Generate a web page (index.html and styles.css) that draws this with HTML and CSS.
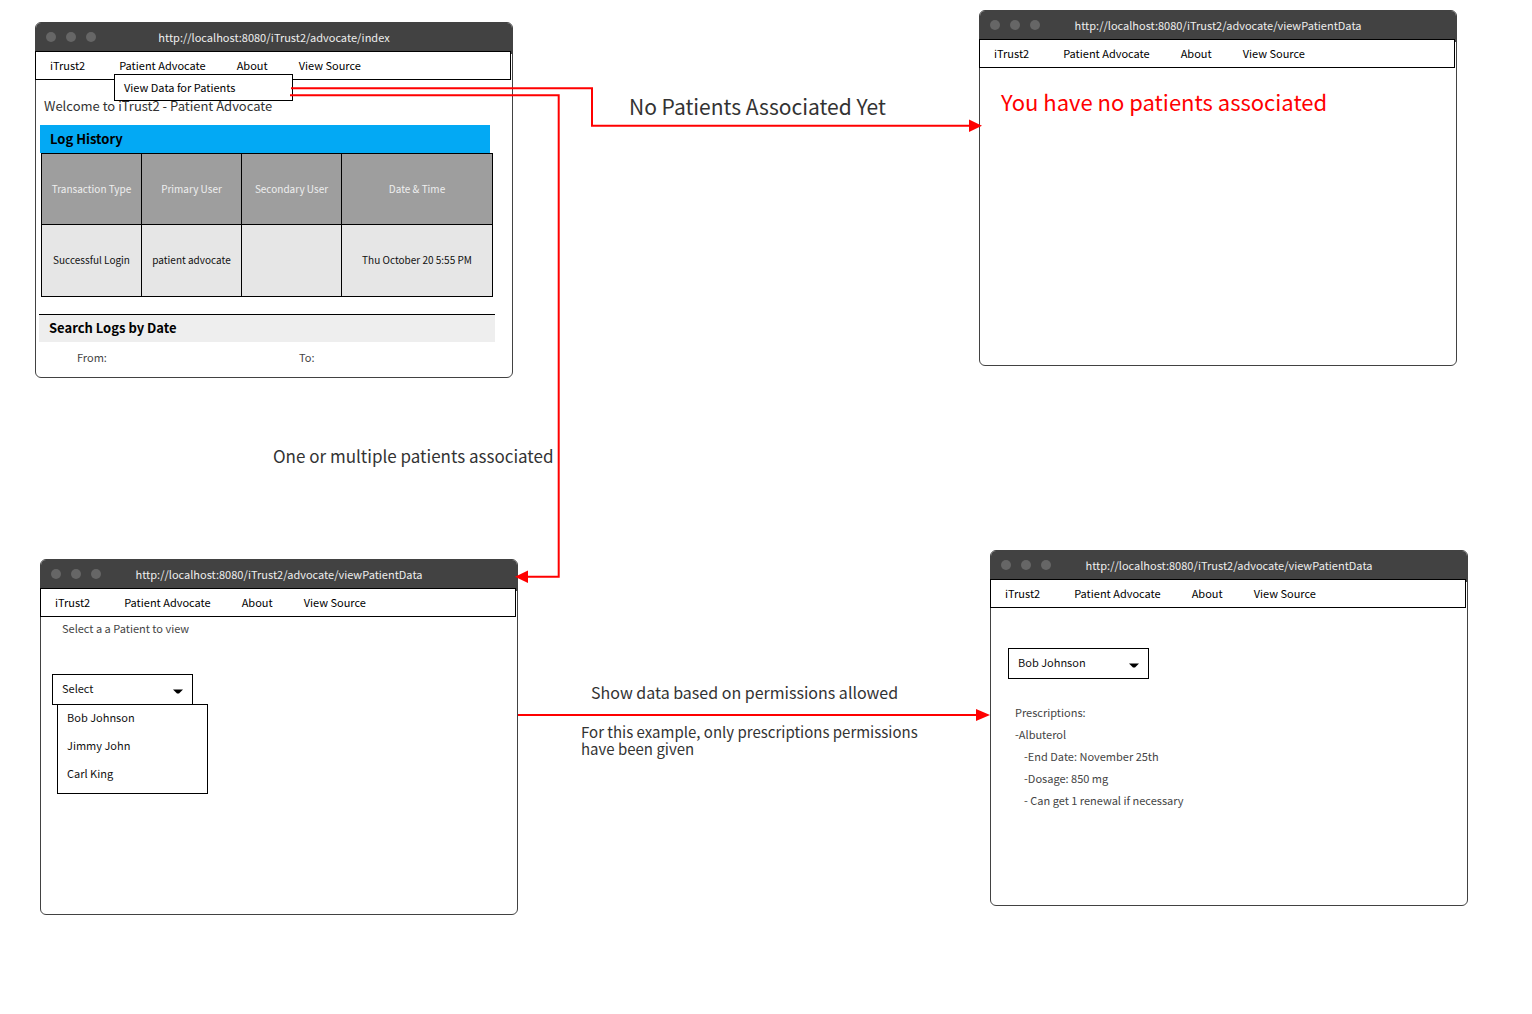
FILE: index.html
```html
<!DOCTYPE html>
<html lang="en">
<head>
<meta charset="utf-8">
<title>iTrust2 - Patient Advocate flow</title>
<link rel="stylesheet" href="styles.css">
</head>
<body>
<main class="canvas">

  <section class="window window-index">
    <header class="titlebar">
      <span class="dots"><i></i><i></i><i></i></span>
      <span class="url">http://localhost:8080/iTrust2/advocate/index</span>
    </header>
    <nav class="nav">
      <a class="brand" href="#">iTrust2</a>
      <a href="#">Patient Advocate</a>
      <a href="#">About</a>
      <a href="#">View Source</a>
      <div class="menu"><a href="#">View Data for Patients</a></div>
    </nav>
    <div class="index-body">
      <h1 class="welcome">Welcome to iTrust2 - Patient Advocate</h1>
      <h2 class="bar bar-log">Log History</h2>
      <table class="log">
        <thead>
          <tr><th>Transaction Type</th><th>Primary User</th><th>Secondary User</th><th class="wide">Date &amp; Time</th></tr>
        </thead>
        <tbody>
          <tr><td>Successful Login</td><td>patient advocate</td><td></td><td>Thu October 20 5:55 PM</td></tr>
        </tbody>
      </table>
      <h2 class="bar bar-search">Search Logs by Date</h2>
      <div class="range"><span>From:</span><span>To:</span></div>
    </div>
  </section>

  <section class="window window-none">
    <header class="titlebar">
      <span class="dots"><i></i><i></i><i></i></span>
      <span class="url">http://localhost:8080/iTrust2/advocate/viewPatientData</span>
    </header>
    <nav class="nav">
      <a class="brand" href="#">iTrust2</a>
      <a href="#">Patient Advocate</a>
      <a href="#">About</a>
      <a href="#">View Source</a>
    </nav>
    <p class="alert">You have no patients associated</p>
  </section>

  <section class="window window-select">
    <header class="titlebar">
      <span class="dots"><i></i><i></i><i></i></span>
      <span class="url">http://localhost:8080/iTrust2/advocate/viewPatientData</span>
    </header>
    <nav class="nav">
      <a class="brand" href="#">iTrust2</a>
      <a href="#">Patient Advocate</a>
      <a href="#">About</a>
      <a href="#">View Source</a>
    </nav>
    <div class="select-body">
      <label class="prompt" for="patient">Select a a Patient to view</label>
      <div class="picker">
        <select id="patient"><option>Select</option></select>
        <svg class="caret" viewBox="0 0 10 5" aria-hidden="true"><path d="M0 0.500H10L6 4.500H4Z"/></svg>
      </div>
      <ul class="options">
        <li>Bob Johnson</li>
        <li>Jimmy John</li>
        <li>Carl King</li>
      </ul>
    </div>
  </section>

  <section class="window window-data">
    <header class="titlebar">
      <span class="dots"><i></i><i></i><i></i></span>
      <span class="url">http://localhost:8080/iTrust2/advocate/viewPatientData</span>
    </header>
    <nav class="nav">
      <a class="brand" href="#">iTrust2</a>
      <a href="#">Patient Advocate</a>
      <a href="#">About</a>
      <a href="#">View Source</a>
    </nav>
    <div class="data-body">
      <div class="picker">
        <select aria-label="Patient"><option>Bob Johnson</option></select>
        <svg class="caret" viewBox="0 0 10 5" aria-hidden="true"><path d="M0 0.500H10L6 4.500H4Z"/></svg>
      </div>
      <div class="rx">
        <p>Prescriptions:</p>
        <p>-Albuterol</p>
        <ul>
          <li>-End Date: November 25th</li>
          <li>-Dosage: 850 mg</li>
          <li>- Can get 1 renewal if necessary</li>
        </ul>
      </div>
    </div>
  </section>

  <svg class="connectors" aria-hidden="true">
    <g fill="none" stroke="#f00" stroke-width="2">
      <path d="M291 88.300H592V125.700H970"/>
      <path d="M290 95.300H558.700V576.700H528"/>
      <path d="M518 715H977"/>
    </g>
    <g fill="#f00">
      <path d="M969 119.500L982 125.700L969 132Z"/>
      <path d="M528 570.500L515 576.700L528 583Z"/>
      <path d="M976 709L990 715L976 721Z"/>
    </g>
  </svg>

  <p class="note note-none">No Patients Associated Yet</p>
  <p class="note note-some">One or multiple patients associated</p>
  <p class="note note-show">Show data based on permissions allowed</p>
  <p class="note note-example">For this example, only prescriptions permissions<br>have been given</p>
</main>
</body>
</html>
```
FILE: styles.css
```css
* { box-sizing: border-box; }

body {
  margin: 0;
  background: #fff;
  color: #111;
  font: 11px/20px "Noto Sans CJK SC", "Noto Sans", sans-serif;
}

h1, h2, p, ul { margin: 0; padding: 0; font-weight: 400; list-style: none; }
a { color: inherit; text-decoration: none; }

.canvas { position: relative; min-height: 1014px; }

/* Browser windows placed on the canvas */
.window {
  position: absolute;
  width: 478px;
  min-height: 356px;
  border: 1px solid #424242;
  border-radius: 6px;
  background: #fff;
}
.window-index { left: 35px; top: 22px; }
.window-none { left: 979px; top: 10px; }
.window-select { left: 40px; top: 559px; }
.window-data { left: 990px; top: 550px; }

.titlebar {
  display: grid;
  grid-template-columns: 1fr auto 1fr;
  align-items: center;
  height: 31px;
  padding: 0 10px 4px;
  border-radius: 5px 5px 0 0;
  background: #424242;
  color: #eee;
}
.dots { display: flex; gap: 10px; }
.dots i { width: 10px; height: 10px; border-radius: 50%; background: #666; }

.nav {
  position: relative;
  display: flex;
  align-items: center;
  gap: 31px;
  height: 29px;
  margin: -3px 1px 0 -1px;
  padding: 0 0 2px 14px;
  border: 1px solid #000;
  background: #fff;
  color: #000;
}
.brand { margin-right: 3px; }
.menu {
  position: absolute;
  left: 78px;
  top: 22px;
  width: 179px;
  height: 27px;
  padding: 2px 9px;
  border: 1px solid #000;
  background: #fff;
}

/* Index page */
.index-body { padding: 16px 16px 8px 4px; }
.welcome { padding-left: 4px; color: #333; font-size: 13px; }
.bar { height: 28px; padding-left: 10px; color: #000; font-size: 13px; line-height: 28px; font-weight: 700; }
.bar-log { width: 450px; margin-top: 9px; background: #03a9f4; }
.log {
  width: 452px;
  margin-left: 1px;
  border-collapse: collapse;
  table-layout: fixed;
  font-size: 10px;
}
.log th, .log td { height: 72px; padding: 0 0 2px; border: 1px solid #000; text-align: center; font-weight: 400; }
.log th { width: 100px; height: 71px; padding: 0; background: #9e9e9e; color: #eee; }
.log th.wide { width: 151px; }
.log td { background: #e6e6e6; }
.bar-search { width: 456px; margin: 17px 0 0 -1px; border-top: 1px solid #000; background: #eee; line-height: 26px; }
.range { display: grid; grid-template-columns: 222px 1fr; padding: 5px 0 0 37px; color: #444; }

.alert { padding: 15px 21px; color: #f00; font-size: 22px; line-height: 36px; }

/* Patient drop-down */
.picker { position: relative; width: 141px; }
.picker select {
  display: block;
  width: 100%;
  height: 31px;
  padding: 0 9px 4px;
  border: 1px solid #000;
  border-radius: 0;
  background: #fff;
  color: #111;
  font: inherit;
  appearance: none;
}
.caret { position: absolute; right: 10px; top: 15px; width: 10px; height: 5px; pointer-events: none; }
.options {
  width: 151px;
  height: 90px;
  margin: -1px 0 0 5px;
  padding-left: 9px;
  border: 1px solid #000;
  background: #fff;
}
.options li { height: 28px; line-height: 24px; }

.select-body { padding: 1px 11px; }
.prompt { display: block; margin-bottom: 36px; padding-left: 10px; color: #444; }
.data-body { padding: 40px 17px; }
.rx { padding: 22px 7px; color: #444; line-height: 22px; }
.rx ul { padding-left: 9px; }

/* Arrows and their captions */
.connectors { position: absolute; inset: 0; width: 100%; height: 100%; pointer-events: none; }
.note { position: absolute; color: #333; white-space: nowrap; }
.note-none { left: 629px; top: 91px; font-size: 21px; line-height: 30px; }
.note-some { left: 273px; top: 446px; font-size: 17px; }
.note-show { left: 591px; top: 682px; font-size: 16px; }
.note-example { left: 581px; top: 723px; font-size: 15px; line-height: 17px; }
```
